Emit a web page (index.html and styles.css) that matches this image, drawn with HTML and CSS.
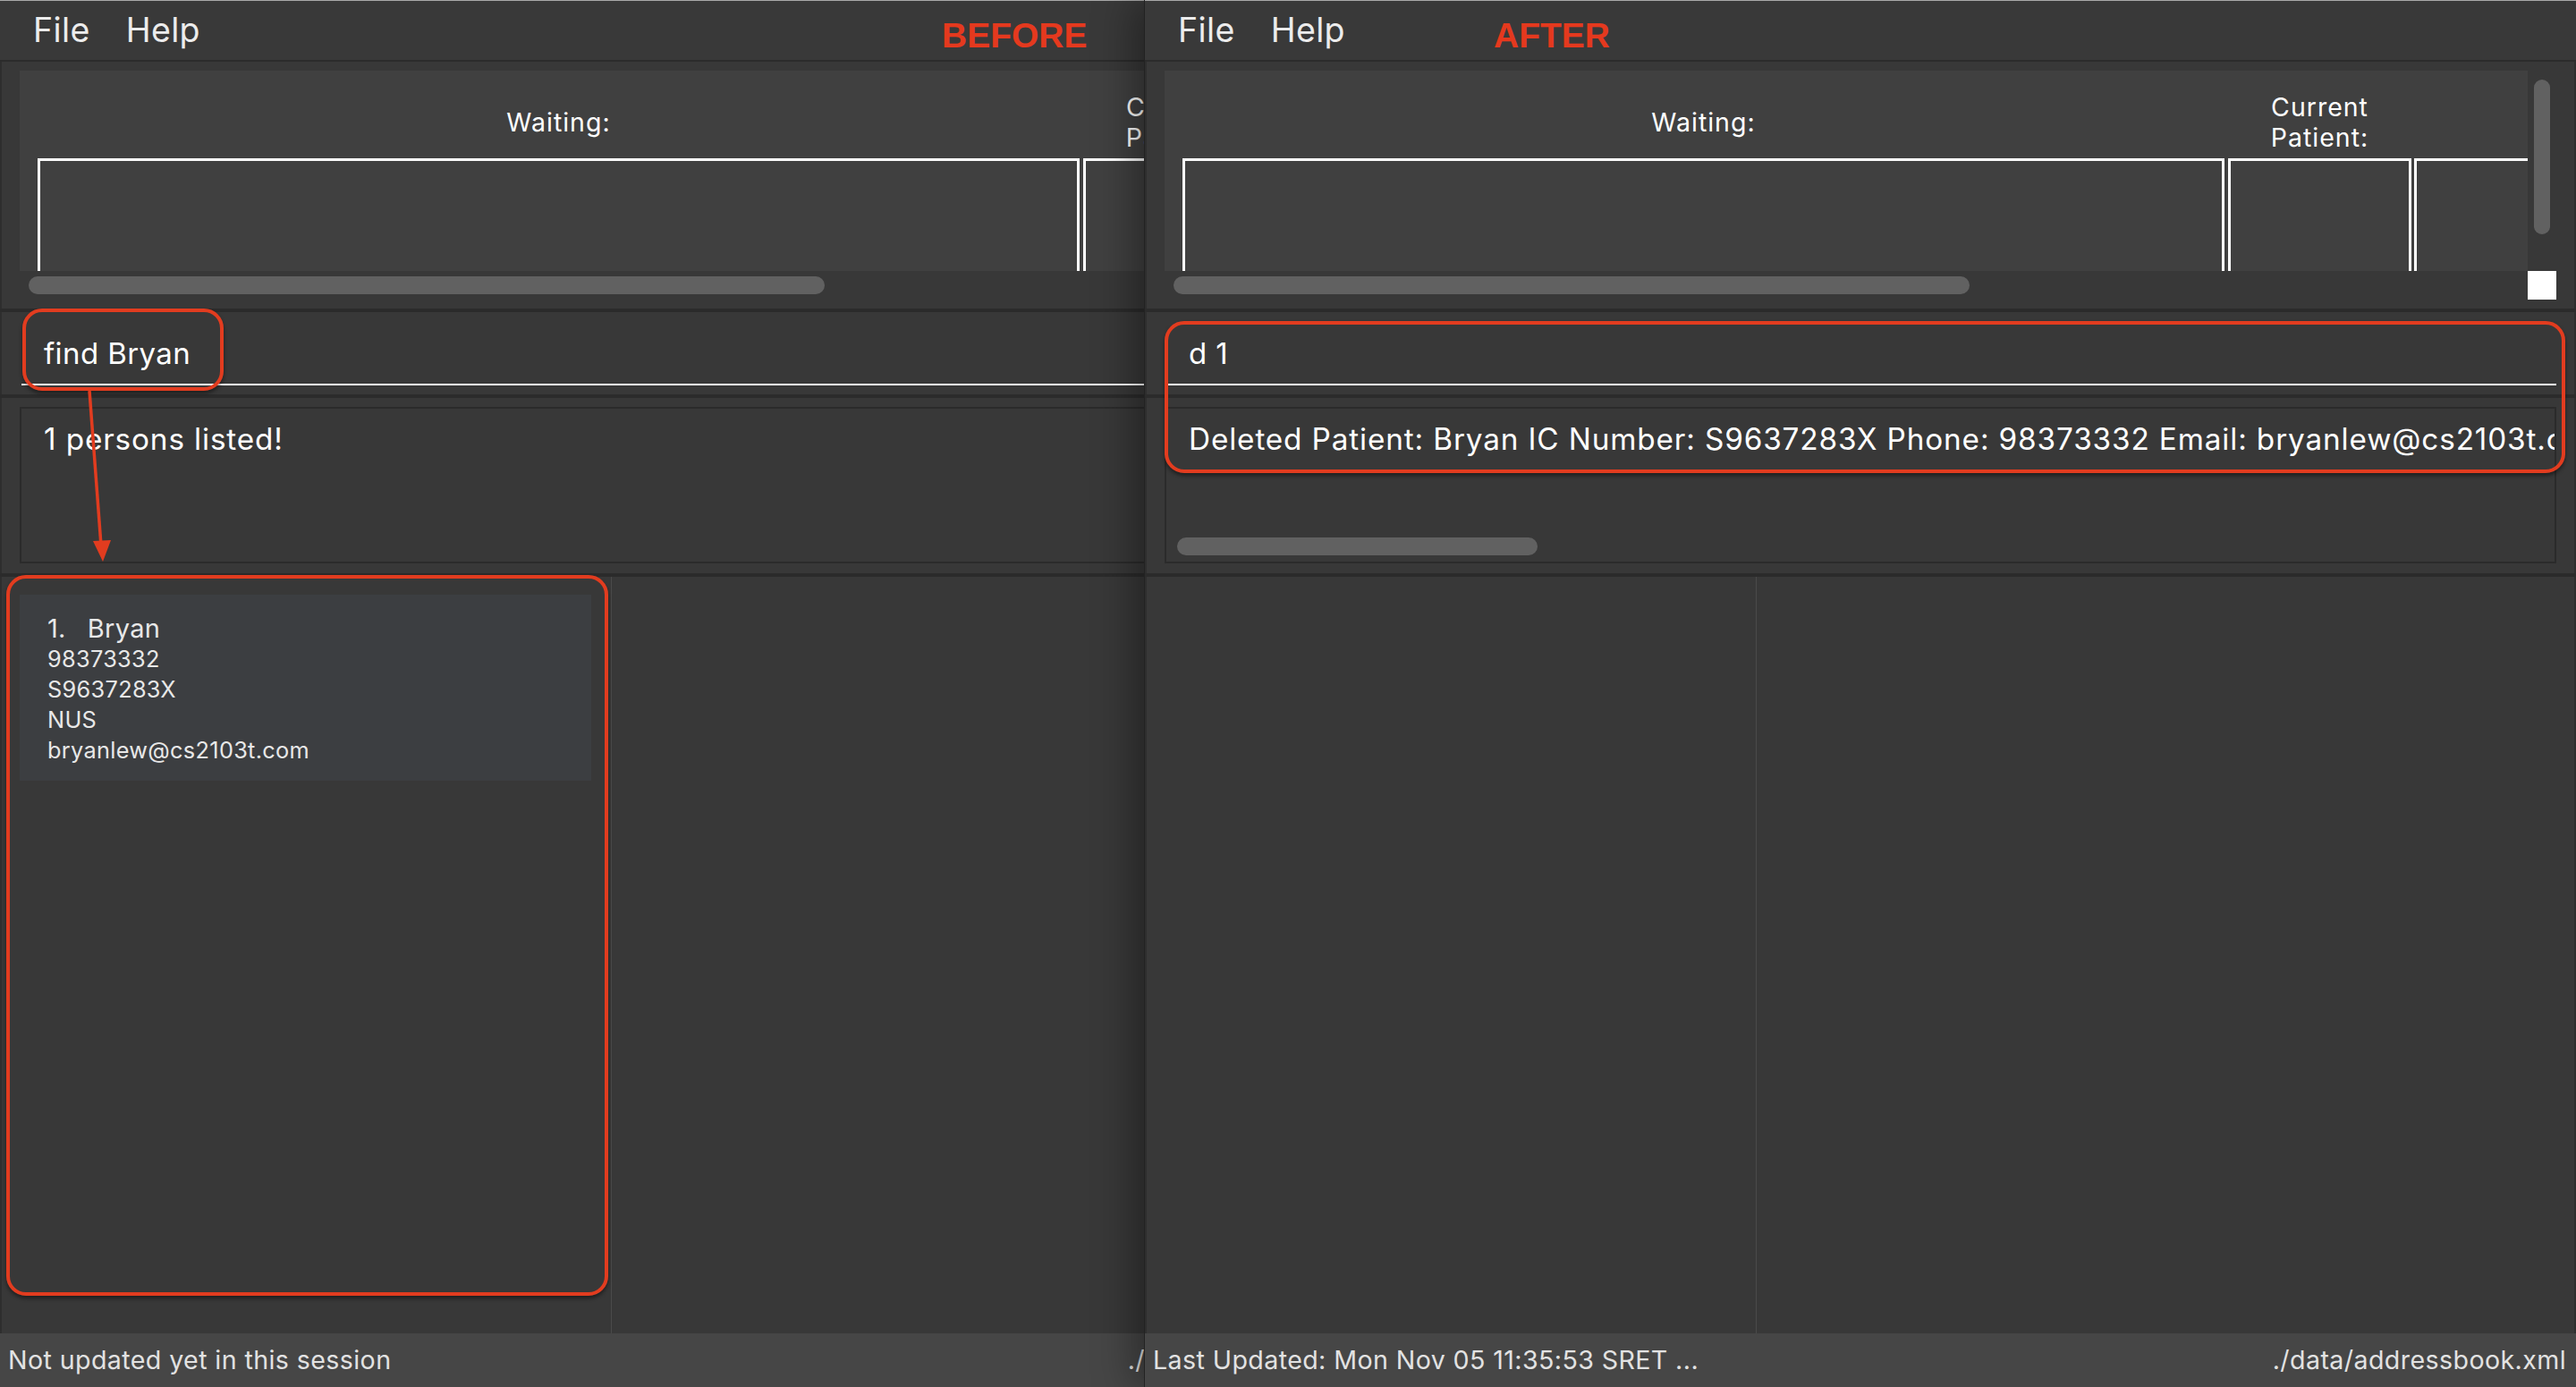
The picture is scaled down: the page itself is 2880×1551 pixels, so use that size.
FILE: index.html
```html
<!DOCTYPE html>
<html>
<head>
<meta charset="utf-8">
<title>Patient Queue - Before / After</title>
<link rel="stylesheet" href="styles.css">
</head>
<body>
<div class="screen">
  <div class="clip">
    <div class="window">
      <div class="menubar"><span class="menu">File</span><span class="menu">Help</span></div>
      <span class="tag tag-before">BEFORE</span>
      <div class="content">
        <div class="queue-pane">
          <div class="queue-view">
            <div class="queue-table">
              <div class="col col-wait"><div class="col-head">Waiting:</div><div class="col-cell"></div></div>
              <div class="col col-current"><div class="col-head">Current<br>Patient:</div><div class="col-cell"></div></div>
              <div class="col col-next"><div class="col-head"></div><div class="col-cell"></div></div>
            </div>
          </div>
          <div class="vscroll"><div class="vthumb"></div></div>
          <div class="hscroll"><div class="hthumb"></div></div>
          <div class="corner"></div>
        </div>
        <div class="command-pane">
          <div class="command-field">find Bryan</div>
        </div>
        <div class="result-pane">
          <div class="result-box">
            <div class="result-text">1 persons listed!</div>
          </div>
        </div>
        <div class="list-pane">
          <div class="person-list">
            <div class="card">
              <div class="card-name"><span class="card-id">1.</span><span>Bryan</span></div>
              <div class="card-line">98373332</div>
              <div class="card-line">S9637283X</div>
              <div class="card-line">NUS</div>
              <div class="card-line">bryanlew@cs2103t.com</div>
            </div>
          </div>
          <div class="browser-pane"></div>
        </div>
        <div class="statusbar">
          <span>Not updated yet in this session</span>
          <span>./data/addressbook.xml</span>
        </div>
      </div>
    </div>
  </div>

  <div class="window window-after">
    <div class="menubar"><span class="menu">File</span><span class="menu">Help</span></div>
    <span class="tag tag-after">AFTER</span>
    <div class="content">
      <div class="queue-pane">
        <div class="queue-view">
          <div class="queue-table">
            <div class="col col-wait"><div class="col-head">Waiting:</div><div class="col-cell"></div></div>
            <div class="col col-current"><div class="col-head">Current<br>Patient:</div><div class="col-cell"></div></div>
            <div class="col col-next"><div class="col-head"></div><div class="col-cell"></div></div>
          </div>
        </div>
        <div class="vscroll"><div class="vthumb"></div></div>
        <div class="hscroll"><div class="hthumb"></div></div>
        <div class="corner"></div>
      </div>
      <div class="command-pane">
        <div class="command-field">d 1</div>
      </div>
      <div class="result-pane">
        <div class="result-box">
          <div class="result-text">Deleted Patient: Bryan IC Number: S9637283X Phone: 98373332 Email: bryanlew@cs2103t.com Address: NUS</div>
          <div class="result-thumb"></div>
        </div>
      </div>
      <div class="list-pane">
        <div class="person-list"></div>
        <div class="browser-pane"></div>
      </div>
      <div class="statusbar">
        <span>Last Updated: Mon Nov 05 11:35:53 SRET ...</span>
        <span>./data/addressbook.xml</span>
      </div>
    </div>
  </div>

  <div class="note-box note-cmd-before"></div>
  <div class="note-box note-card-before"></div>
  <div class="note-box note-after"></div>
  <svg class="note-arrow" width="40" height="200" viewBox="90 430 40 200">
    <line x1="100" y1="437" x2="113" y2="610" stroke="#e23c1f" stroke-width="3.5"/>
    <polygon points="104,605 124,604 115,628" fill="#e23c1f"/>
  </svg>
</div>
</body>
</html>
```

FILE: styles.css
```css
* {
  box-sizing: border-box;
  margin: 0;
  padding: 0;
}

html, body {
  width: 2880px;
  height: 1551px;
  overflow: hidden;
  background: #383838;
}

body {
  font-family: Inter, "Noto Sans", "Liberation Sans", sans-serif;
  color: #ffffff;
  letter-spacing: 0.025em;
}

.screen {
  position: relative;
  display: flex;
  width: 2880px;
  height: 1551px;
}

.clip {
  flex: none;
  width: 1280px;
  height: 1551px;
  overflow: hidden;
}

.window {
  position: relative;
  flex: none;
  width: 1600px;
  height: 1551px;
  display: flex;
  flex-direction: column;
  background: #383838;
}

.window-after {
  z-index: 1;
  box-shadow: -1px 0 0 #222222, -14px 0 40px rgba(0, 0, 0, 0.35);
}

/* ---------- menu bar ---------- */
.menubar {
  height: 67px;
  flex: none;
  display: flex;
  align-items: flex-start;
  padding-left: 37px;
  border-top: 1px solid #a9a9a9;
  background: #393939;
  font-size: 37.5px;
  line-height: 66px;
  letter-spacing: 0.01em;
  color: #ececec;
}

.menu + .menu {
  margin-left: 40px;
}

.tag {
  position: absolute;
  top: 20px;
  font-family: "Liberation Sans", Arial, sans-serif;
  font-weight: 700;
  font-size: 39px;
  line-height: 39px;
  letter-spacing: 0;
  color: #e5391e;
}

.tag-before { left: 1053px; }
.tag-after { left: 390px; }

/* ---------- content ---------- */
.content {
  flex: 1;
  display: flex;
  flex-direction: column;
  border-top: 2px solid #2b2b2b;
  box-shadow: inset 2px 0 0 #2e2e2e, inset -2px 0 0 #2e2e2e;
}

/* queue pane */
.queue-pane {
  flex: none;
  height: 276px;
  padding: 10px 22px;
  display: grid;
  grid-template-columns: 1524px 32px;
  grid-template-rows: 224px 32px;
}

.queue-view {
  background: #404040;
  overflow: hidden;
}

.queue-table {
  display: flex;
  padding-left: 20px;
  width: 2000px;
}

.col {
  flex: none;
  display: flex;
  flex-direction: column;
}

.col-wait { width: 1165px; margin-right: 4px; }
.col-current { width: 205px; margin-right: 3px; }
.col-next { width: 400px; }

.col-head {
  height: 98px;
  padding-top: 17px;
  display: flex;
  align-items: center;
  justify-content: center;
  text-align: center;
  font-size: 28.5px;
  line-height: 34px;
  letter-spacing: 0.035em;
  color: #ffffff;
}

.col-cell {
  height: 200px;
  border: 3px solid #ffffff;
  border-bottom: none;
}

.vscroll {
  padding: 10px 7px 0 7px;
}

.vthumb {
  width: 18px;
  height: 173px;
  border-radius: 9px;
  background: #616161;
}

.hscroll {
  padding: 6px 0 0 10px;
}

.hthumb {
  width: 890px;
  height: 20px;
  border-radius: 10px;
  background: #616161;
}

.corner {
  background: #ffffff;
}

/* command pane */
.command-pane {
  flex: none;
  height: 96px;
  border-top: 4px solid #2b2b2b;
  padding: 0 22px 10px 24px;
}

.command-field {
  height: 82px;
  padding: 26px 0 0 25px;
  border-bottom: 2px solid #ffffff;
  font-size: 33px;
  line-height: 40px;
  color: #ffffff;
  white-space: nowrap;
  overflow: hidden;
}

/* result pane */
.result-pane {
  flex: none;
  height: 200px;
  border-top: 4px solid #2b2b2b;
  padding: 10px 22px 11px 22px;
}

.result-box {
  height: 175px;
  border: 2px solid #2b2b2b;
  padding: 14px 0 7px 25px;
  display: flex;
  flex-direction: column;
  justify-content: space-between;
  overflow: hidden;
}

.result-text {
  font-size: 33.3px;
  line-height: 40px;
  letter-spacing: 0.026em;
  color: #ffffff;
  white-space: nowrap;
}

.result-thumb {
  width: 403px;
  height: 20px;
  margin-left: -13px;
  border-radius: 10px;
  background: #616161;
}

/* list pane */
.list-pane {
  flex: none;
  height: 850px;
  border-top: 4px solid #2b2b2b;
  display: flex;
}

.person-list {
  flex: none;
  width: 684px;
  border-right: 1px solid #4a4a4a;
  padding: 20px 22px 0 22px;
}

.browser-pane {
  flex: 1;
}

.card {
  background: #3c3e41;
  padding: 21px 0 17px 31px;
  color: #e8e8e8;
  letter-spacing: 0.02em;
}

.card-name {
  font-size: 29px;
  line-height: 34px;
}

.card-id {
  margin-right: 24px;
}

.card-line {
  font-size: 25.3px;
  line-height: 34px;
}

/* status bar */
.statusbar {
  flex: none;
  height: 60px;
  display: flex;
  justify-content: space-between;
  padding: 0 11px 0 9px;
  background: #464646;
  font-size: 28.6px;
  line-height: 60px;
  color: #e2e2e2;
  white-space: nowrap;
}

/* ---------- annotations ---------- */
.note-box {
  position: absolute;
  z-index: 2;
  border: 4px solid #e23c1f;
  border-radius: 22px;
  box-shadow: 0 3px 4px rgba(0, 0, 0, 0.45);
}

.note-cmd-before {
  left: 25px;
  top: 345px;
  width: 225px;
  height: 92px;
}

.note-card-before {
  left: 7px;
  top: 643px;
  width: 673px;
  height: 806px;
}

.note-after {
  left: 1302px;
  top: 359px;
  width: 1566px;
  height: 170px;
}

.note-arrow {
  position: absolute;
  z-index: 2;
  left: 90px;
  top: 430px;
  width: 40px;
  height: 200px;
}
```
